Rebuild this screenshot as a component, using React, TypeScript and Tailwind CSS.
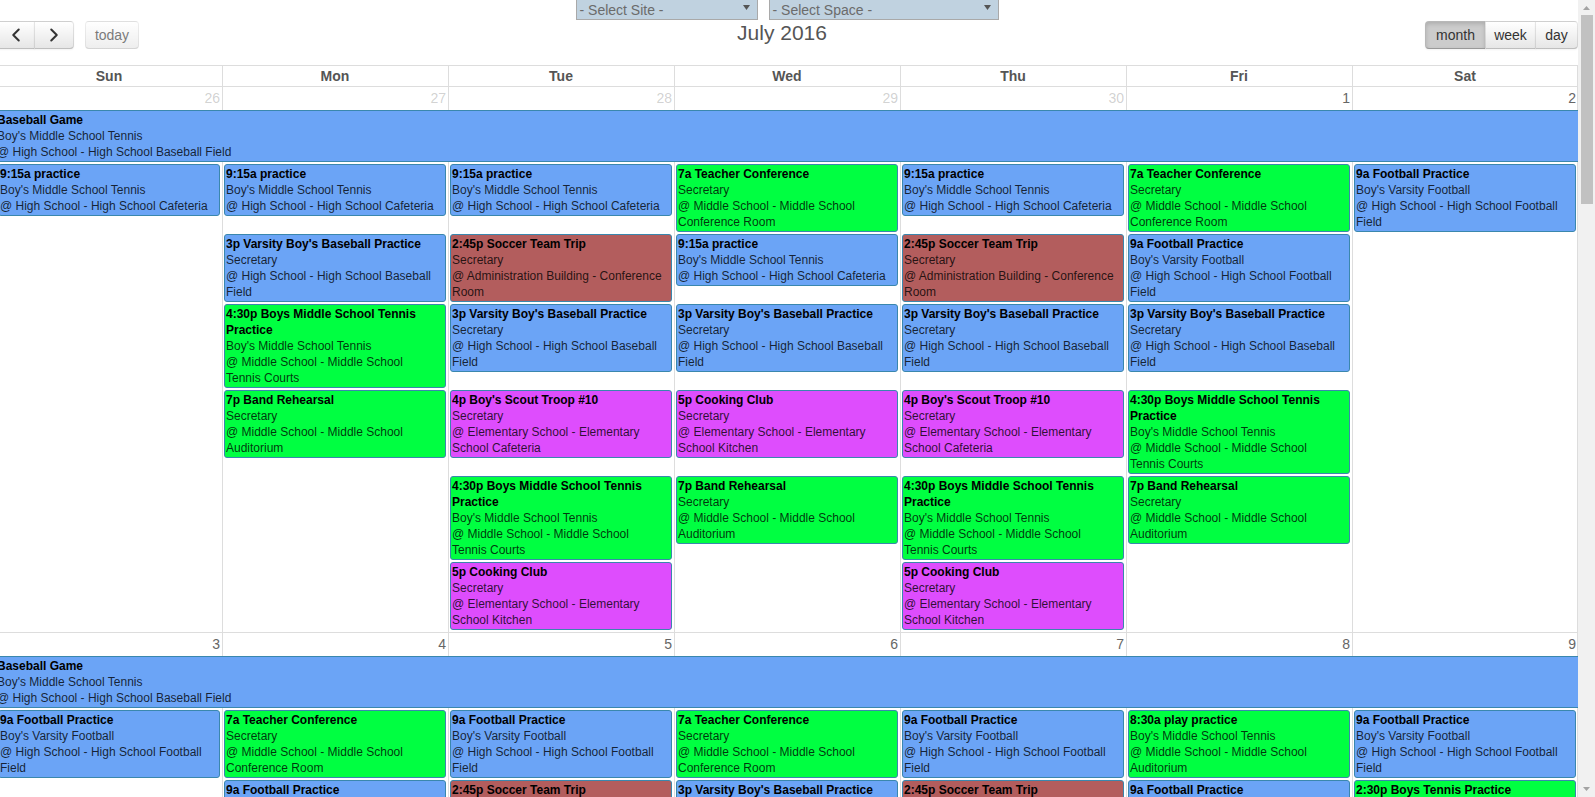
import { ChevronLeft, ChevronRight } from "lucide-react";

type CalEvent = {
  title: string;
  who: string;
  site: string;
  space: string;
  color: string;
};

const BLUE = "bg-[#6ba4f6]";
const GREEN = "bg-[#00ff41]";
const RED = "bg-[#b35d5d]";
const PINK = "bg-[#de4dfd]";

const ev: Record<string, CalEvent> = {
  baseball: { title: "Baseball Game", who: "Boy's Middle School Tennis", site: "High School", space: "High School Baseball Field", color: BLUE },
  practice: { title: "9:15a practice", who: "Boy's Middle School Tennis", site: "High School", space: "High School Cafeteria", color: BLUE },
  varsity: { title: "3p Varsity Boy's Baseball Practice", who: "Secretary", site: "High School", space: "High School Baseball Field", color: BLUE },
  tennis: { title: "4:30p Boys Middle School Tennis Practice", who: "Boy's Middle School Tennis", site: "Middle School", space: "Middle School Tennis Courts", color: GREEN },
  band: { title: "7p Band Rehearsal", who: "Secretary", site: "Middle School", space: "Middle School Auditorium", color: GREEN },
  soccer: { title: "2:45p Soccer Team Trip", who: "Secretary", site: "Administration Building", space: "Conference Room", color: RED },
  scout: { title: "4p Boy's Scout Troop #10", who: "Secretary", site: "Elementary School", space: "Elementary School Cafeteria", color: PINK },
  cooking: { title: "5p Cooking Club", who: "Secretary", site: "Elementary School", space: "Elementary School Kitchen", color: PINK },
  teacher: { title: "7a Teacher Conference", who: "Secretary", site: "Middle School", space: "Middle School Conference Room", color: GREEN },
  football: { title: "9a Football Practice", who: "Boy's Varsity Football", site: "High School", space: "High School Football Field", color: BLUE },
  play: { title: "8:30a play practice", who: "Boy's Middle School Tennis", site: "Middle School", space: "Middle School Auditorium", color: GREEN },
  tennis230: { title: "2:30p Boys Tennis Practice", who: "Boy's Middle School Tennis", site: "Middle School", space: "Middle School Tennis Courts", color: GREEN },
};

type Week = {
  days: { n: number; other?: boolean }[];
  allDay: CalEvent;
  cols: CalEvent[][];
};

const weeks: Week[] = [
  {
    days: [
      { n: 26, other: true },
      { n: 27, other: true },
      { n: 28, other: true },
      { n: 29, other: true },
      { n: 30, other: true },
      { n: 1 },
      { n: 2 },
    ],
    allDay: ev.baseball,
    cols: [
      [ev.practice],
      [ev.practice, ev.varsity, ev.tennis, ev.band],
      [ev.practice, ev.soccer, ev.varsity, ev.scout, ev.tennis, ev.cooking],
      [ev.teacher, ev.practice, ev.varsity, ev.cooking, ev.band],
      [ev.practice, ev.soccer, ev.varsity, ev.scout, ev.tennis, ev.cooking],
      [ev.teacher, ev.football, ev.varsity, ev.tennis, ev.band],
      [ev.football],
    ],
  },
  {
    days: [{ n: 3 }, { n: 4 }, { n: 5 }, { n: 6 }, { n: 7 }, { n: 8 }, { n: 9 }],
    allDay: ev.baseball,
    cols: [
      [ev.football],
      [ev.teacher, ev.football],
      [ev.football, ev.soccer],
      [ev.teacher, ev.varsity],
      [ev.football, ev.soccer],
      [ev.play, ev.football],
      [ev.football, ev.tennis230],
    ],
  },
];

const colStart = ["col-start-1", "col-start-2", "col-start-3", "col-start-4", "col-start-5", "col-start-6", "col-start-7"];
const rowStart = ["row-start-1", "row-start-2", "row-start-3", "row-start-4", "row-start-5", "row-start-6", "row-start-7", "row-start-8"];

const dayNames = ["Sun", "Mon", "Tue", "Wed", "Thu", "Fri", "Sat"];

// vertical day separators, one every 226px column
const colLines = "bg-[linear-gradient(to_right,#ddd_1px,transparent_1px)] bg-[length:226px_100%]";

const btnBase =
  "h-[28px] border border-black/10 border-b-black/25 text-[14px] text-[#333] flex items-center justify-center";
const btn = `${btnBase} bg-[#f5f5f5] bg-[linear-gradient(to_bottom,#fff,#e6e6e6)] shadow-[inset_0_1px_0_rgba(255,255,255,0.2),0_1px_2px_rgba(0,0,0,0.05)]`;
const btnActive = `${btnBase} bg-[#cccccc] shadow-[inset_0_2px_4px_rgba(0,0,0,0.15),0_1px_2px_rgba(0,0,0,0.05)]`;

function EventBox({ e, className = "" }: { e: CalEvent; className?: string }) {
  return (
    <div
      className={`${e.color} self-start border border-[#3a87ad] py-px text-[12px] leading-4 ${className}`}
    >
      <div className="font-bold text-black">{e.title}</div>
      <div className="text-black/80">{e.who}</div>
      <div className="text-black/80">
        @ {e.site} - {e.space}
      </div>
    </div>
  );
}

function SelectBox({ label, width }: { label: string; width: string }) {
  return (
    <div
      className={`${width} h-[20px] border border-t-0 border-[#a9a9a9] bg-[#c0d2e0] flex items-center justify-between pl-[3px] pr-[7px] pt-px text-[14px] leading-[19px] text-[#6b6b6b]`}
    >
      <span>{label}</span>
      <svg width="7" height="5" viewBox="0 0 7 5" className="-mt-[5px]">
        <polygon points="0,0 7,0 3.5,5" fill="#555" />
      </svg>
    </div>
  );
}

function WeekRow({ week, first }: { week: Week; first: boolean }) {
  return (
    <div className={`${colLines} shadow-[inset_-1px_0_0_#ddd] ${first ? "" : "border-t border-[#ddd]"}`}>
      <div className="grid grid-cols-7 h-[21px]">
        {week.days.map((d) => (
          <div
            key={d.n}
            className={`text-right pr-[2px] pt-[2px] text-[14px] leading-[19px] ${d.other ? "text-[#666]/30" : "text-[#666]"}`}
          >
            {d.n}
          </div>
        ))}
      </div>
      <div className="grid grid-cols-7 gap-y-[2px] py-[2px]">
        <EventBox e={week.allDay} className="col-start-1 col-span-7 row-start-1 border-x-0 px-px" />
        {week.cols.map((list, c) =>
          list.map((e, i) => (
            <EventBox
              key={`${c}-${i}`}
              e={e}
              className={`${colStart[c]} ${rowStart[i + 1]} mx-[2px] rounded-[3px] pl-px pr-[6px]`}
            />
          ))
        )}
      </div>
    </div>
  );
}

function Scrollbar() {
  return (
    <div className="w-[17px] h-full bg-[#f1f1f1] flex flex-col items-center">
      <div className="h-[15px] w-full flex items-center justify-center">
        <svg width="7" height="4" viewBox="0 0 7 4">
          <polygon points="0,4 3.5,0 7,4" fill="#a3a3a3" />
        </svg>
      </div>
      <div className="w-[12px] h-[189px] bg-[#c1c1c1] ml-px" />
      <div className="flex-1" />
      <div className="h-[17px] w-full flex items-center justify-center">
        <svg width="7" height="4" viewBox="0 0 7 4">
          <polygon points="0,0 7,0 3.5,4" fill="#a3a3a3" />
        </svg>
      </div>
    </div>
  );
}

export default function App() {
  return (
    <div className="flex h-screen w-full overflow-hidden bg-white font-['Liberation_Sans',Arial,sans-serif]">
      <div className="flex-1 min-w-0 overflow-hidden">
        <div className="w-[1582px] -ml-[4px]">
          <div className="flex justify-center gap-[11px]">
            <SelectBox label="- Select Site -" width="w-[182px]" />
            <SelectBox label="- Select Space -" width="w-[230px]" />
          </div>

          <div className="mt-px mb-4 flex items-start h-[28px]">
            <div className="flex">
              <button className={`${btn} w-[39px] rounded-l-[4px]`}>
                <ChevronLeft size={22} strokeWidth={2.2} />
              </button>
              <button className={`${btn} w-[40px] -ml-px rounded-r-[4px]`}>
                <ChevronRight size={22} strokeWidth={2.2} />
              </button>
              <button className={`${btnBase} bg-[#f5f5f5] bg-[linear-gradient(to_bottom,#fff,#e6e6e6)] w-[54px] ml-[11px] rounded-[4px] opacity-65`}>
                today
              </button>
            </div>
            <h2 className="flex-1 text-center text-[21px] leading-[23px] text-[#555]">July 2016</h2>
            <div className="flex">
              <button className={`${btnActive} w-[61px] rounded-l-[4px]`}>month</button>
              <button className={`${btn} w-[51px] -ml-px`}>week</button>
              <button className={`${btn} w-[43px] -ml-px rounded-r-[4px]`}>day</button>
            </div>
          </div>

          <div className={`${colLines} grid grid-cols-7 border-y border-[#ddd] shadow-[inset_-1px_0_0_#ddd]`}>
            {dayNames.map((d) => (
              <div key={d} className="h-[20px] pt-px text-center text-[14px] leading-[19px] font-bold text-[#555]">
                {d}
              </div>
            ))}
          </div>

          {weeks.map((w, i) => (
            <WeekRow key={i} week={w} first={i === 0} />
          ))}
        </div>
      </div>
      <Scrollbar />
    </div>
  );
}
